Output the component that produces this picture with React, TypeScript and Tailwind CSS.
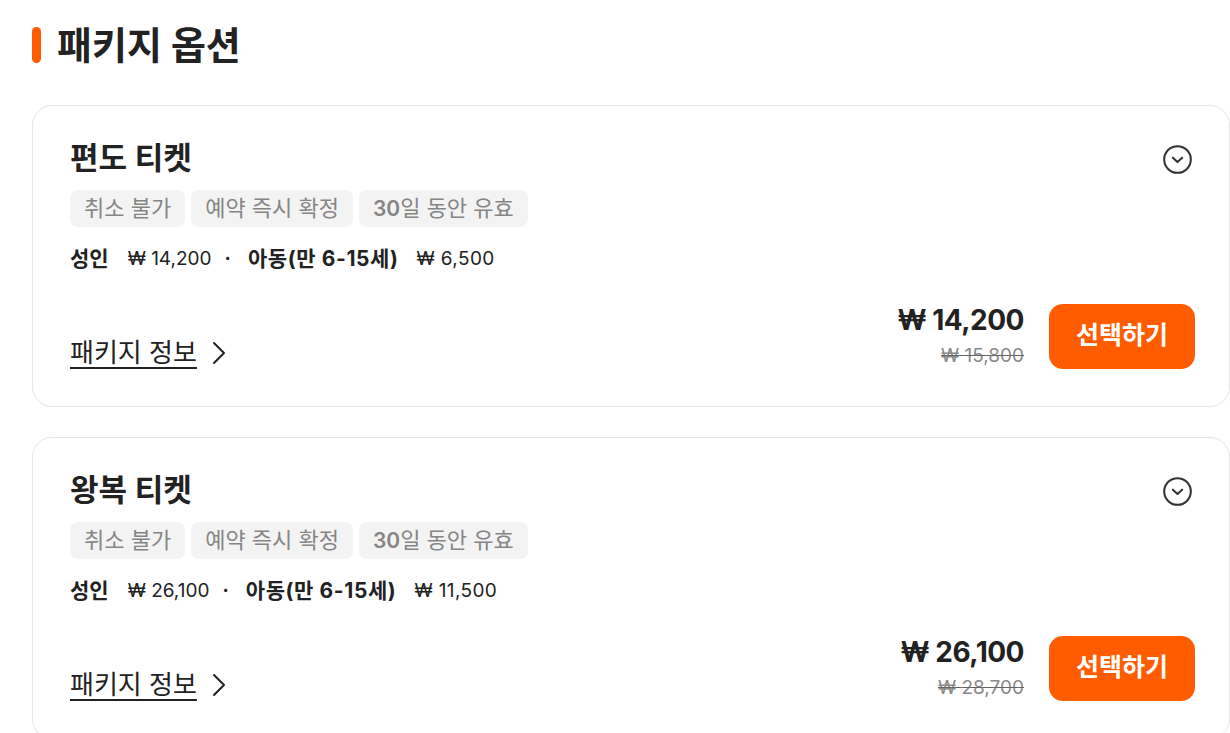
const packages = [
  {
    name: '편도 티켓',
    adult: '14,200',
    child: '6,500',
    price: '14,200',
    original: '15,800',
  },
  {
    name: '왕복 티켓',
    adult: '26,100',
    child: '11,500',
    price: '26,100',
    original: '28,700',
  },
]

const tags = ['취소 불가', '예약 즉시 확정']

function PackageCard({ pkg }: { pkg: (typeof packages)[number] }) {
  return (
    <div className="w-[1198px] rounded-[20px] border border-[#e6e6e6] bg-white pl-[37px] pr-[34px] pt-[32px] pb-[37px]">
      <div className="flex items-start justify-between">
        <h3 className="text-[31px] font-semibold leading-[40px] text-[#222]">{pkg.name}</h3>
        <svg width="31" height="31" viewBox="0 0 24 24" fill="none" stroke="#333" strokeWidth="1.6" strokeLinecap="round" strokeLinejoin="round" className="mt-[6px] mr-[2px]">
          <circle cx="12" cy="12" r="10.3" />
          <path d="m8.4 10.6 3.6 3.3 3.6-3.3" />
        </svg>
      </div>
      <div className="mt-[12px] flex gap-[6px]">
        {tags.map(t => (
          <span key={t} className="rounded-[8px] bg-[#f3f3f3] px-[14px] py-[3px] text-[22px] leading-[30px] text-[#858585]">
            {t}
          </span>
        ))}
        <span className="rounded-[8px] bg-[#f3f3f3] px-[14px] py-[3px] text-[22px] leading-[30px] text-[#858585]">
          <span className="text-[21px] font-semibold">30</span>일 동안 유효
        </span>
      </div>
      <div className="mt-[18px] flex items-center leading-[28px] text-[#222]">
        <span className="text-[21px] font-bold">성인</span>
        <span className="ml-[19px] text-[19px]">₩ {pkg.adult}</span>
        <span className="ml-[13px] mr-[17px] text-[19px] font-bold">·</span>
        <span className="text-[21px] font-bold tracking-[0.6px]">아동(만 6-15세)</span>
        <span className="ml-[18px] text-[19px] tracking-[0.4px]">₩ {pkg.child}</span>
      </div>
      <div className="mt-[30px] flex items-end justify-between">
        <a className="flex items-center gap-[14px] text-[26px] leading-[32px] text-[#222]">
          <span className="underline underline-offset-[5px] decoration-[2px]">패키지 정보</span>
          <svg width="18" height="26" viewBox="0 0 18 26" fill="none" stroke="#222" strokeWidth="2" strokeLinecap="round" strokeLinejoin="round">
            <path d="m3 3 10 10L3 23" />
          </svg>
        </a>
        <div className="flex items-center gap-[25px]">
          <div className="flex flex-col items-end">
            <span className="text-[28px] font-bold leading-[34px] tracking-[-0.5px] text-[#222]">₩ {pkg.price}</span>
            <span className="mt-[6px] text-[19px] leading-[26px] text-[#8a8a8a] line-through decoration-[#666]">₩ {pkg.original}</span>
          </div>
          <button className="h-[65px] w-[146px] rounded-[14px] bg-[#ff5c00] text-[25px] font-bold text-white">
            선택하기
          </button>
        </div>
      </div>
    </div>
  )
}

export default function App() {
  return (
    <div
      className="min-h-screen overflow-hidden bg-white pl-[32px] pt-[21px]"
      style={{ fontFamily: 'Inter, "Noto Sans CJK KR", sans-serif' }}
    >
      <div className="flex items-center gap-[16px]">
        <span className="h-[36px] w-[9px] rounded-full bg-[#ff5c00]" />
        <h2 className="text-[38px] font-bold leading-[48px] text-[#222]">패키지 옵션</h2>
      </div>
      <div className="mt-[36px] flex flex-col gap-[30px]">
        {packages.map(p => (
          <PackageCard key={p.name} pkg={p} />
        ))}
      </div>
    </div>
  )
}
